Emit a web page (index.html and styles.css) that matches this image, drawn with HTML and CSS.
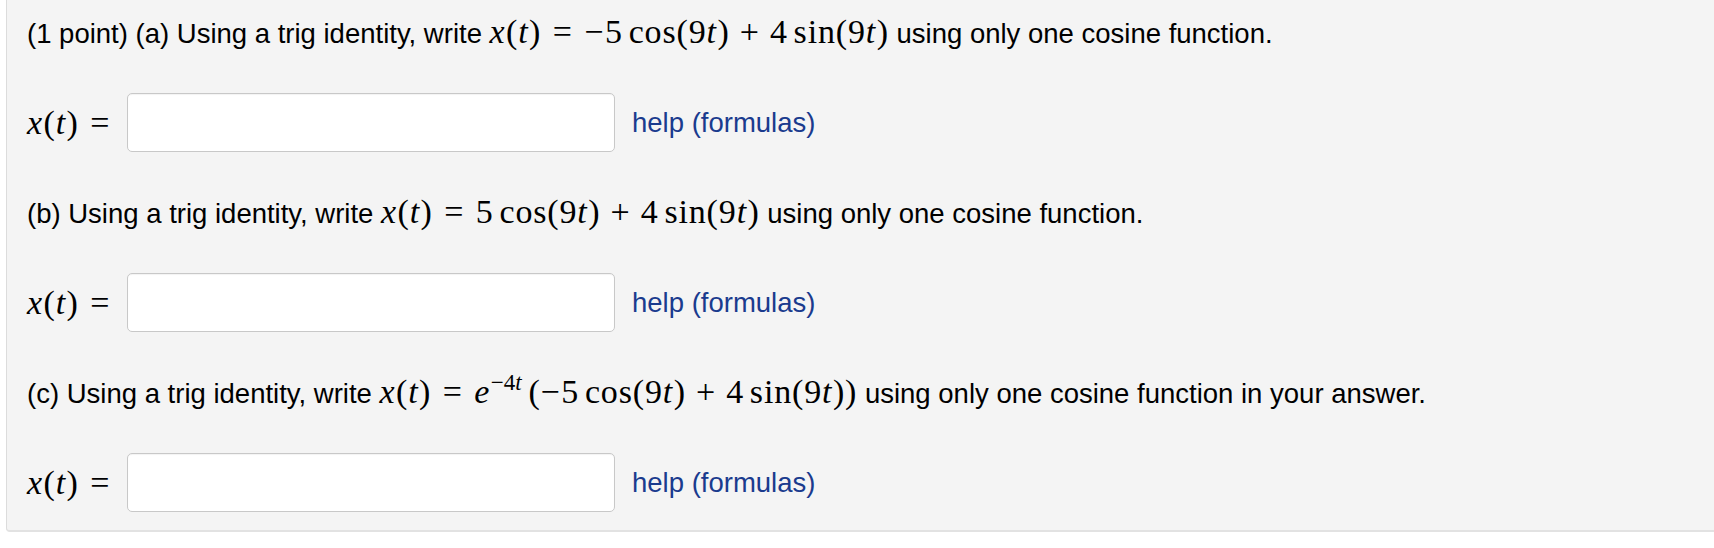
FILE: index.html
```html
<!DOCTYPE html>
<html lang="en">
<head>
<meta charset="utf-8">
<title>Trig identity problem</title>
<link rel="stylesheet" href="styles.css">
</head>
<body>
<div class="problem">
  <div class="q">(1 point) (a) Using a trig identity, write <span class="m"><i>x</i>(<i>t</i>)<span class="rel">=</span><span class="un">−</span>5<span class="th"></span>cos(9<i>t</i>)<span class="bin">+</span>4<span class="th"></span>sin(9<i>t</i>)</span> using only one cosine function.</div>
  <div class="ans">
    <span class="lbl m"><i>x</i>(<i>t</i>)<span class="rel">=</span></span>
    <input class="field" type="text" aria-label="answer a">
    <a class="help" href="#">help (formulas)</a>
  </div>

  <div class="q">(b) Using a trig identity, write <span class="m"><i>x</i>(<i>t</i>)<span class="rel">=</span>5<span class="th"></span>cos(9<i>t</i>)<span class="bin">+</span>4<span class="th"></span>sin(9<i>t</i>)</span> using only one cosine function.</div>
  <div class="ans">
    <span class="lbl m"><i>x</i>(<i>t</i>)<span class="rel">=</span></span>
    <input class="field" type="text" aria-label="answer b">
    <a class="help" href="#">help (formulas)</a>
  </div>

  <div class="q">(c) Using a trig identity, write <span class="m"><i>x</i>(<i>t</i>)<span class="rel">=</span><i>e</i><span class="sup">−4<i>t</i></span><span class="gap"></span>(<span class="un">−</span>5<span class="th"></span>cos(9<i>t</i>)<span class="bin">+</span>4<span class="th"></span>sin(9<i>t</i>))</span> using only one cosine function in your answer.</div>
  <div class="ans">
    <span class="lbl m"><i>x</i>(<i>t</i>)<span class="rel">=</span></span>
    <input class="field" type="text" aria-label="answer c">
    <a class="help" href="#">help (formulas)</a>
  </div>
</div>
</body>
</html>
```

FILE: styles.css
```css
html, body {
  margin: 0;
  padding: 0;
  background: #ffffff;
  overflow: hidden;
}

body {
  font-family: "Liberation Sans", Arial, Helvetica, sans-serif;
  font-size: 27.5px;
  color: #000;
}

.problem {
  margin-left: 6px;
  margin-right: -20px;
  background: #f4f4f4;
  border-left: 1px solid #dcdcdc;
  border-bottom: 2px solid #e2e2e2;
  border-bottom-left-radius: 4px;
  padding: 12px 0 18px 20px;
}

.q {
  height: 40px;
  line-height: 40px;
  white-space: nowrap;
}

.ans {
  margin-top: 41px;
  height: 59px;
  display: flex;
  align-items: center;
}

.ans + .q {
  margin-top: 40px;
}

.m {
  font-family: "Liberation Serif", "Times New Roman", serif;
  font-size: 34px;
  letter-spacing: 0.025em;
  white-space: nowrap;
}

.m i {
  font-style: italic;
  letter-spacing: 0.04em;
}

.rel {
  margin: 0 0.34em;
}

.bin {
  margin: 0 0.3em;
}

.un {
  margin-right: 0.02em;
}

.th {
  display: inline-block;
  width: 0.17em;
}

.gap {
  display: inline-block;
  width: 0.2em;
}

.sup {
  font-size: 23px;
  vertical-align: 0.55em;
  line-height: 0;
  letter-spacing: 0;
}

.sup i {
  letter-spacing: 0;
}

.lbl {
  width: 100px;
  flex: none;
}

.lbl .rel {
  margin-right: 0;
}

.field {
  box-sizing: border-box;
  width: 488px;
  height: 59px;
  margin: 0;
  padding: 4px 10px;
  border: 1px solid #c8c8c8;
  border-radius: 5px;
  background: #fff;
  box-shadow: inset 0 1px 1px rgba(0, 0, 0, 0.05);
  font-size: 22px;
  flex: none;
}

.help {
  margin-left: 17px;
  color: #1a3b8e;
  text-decoration: none;
  white-space: nowrap;
}
```
